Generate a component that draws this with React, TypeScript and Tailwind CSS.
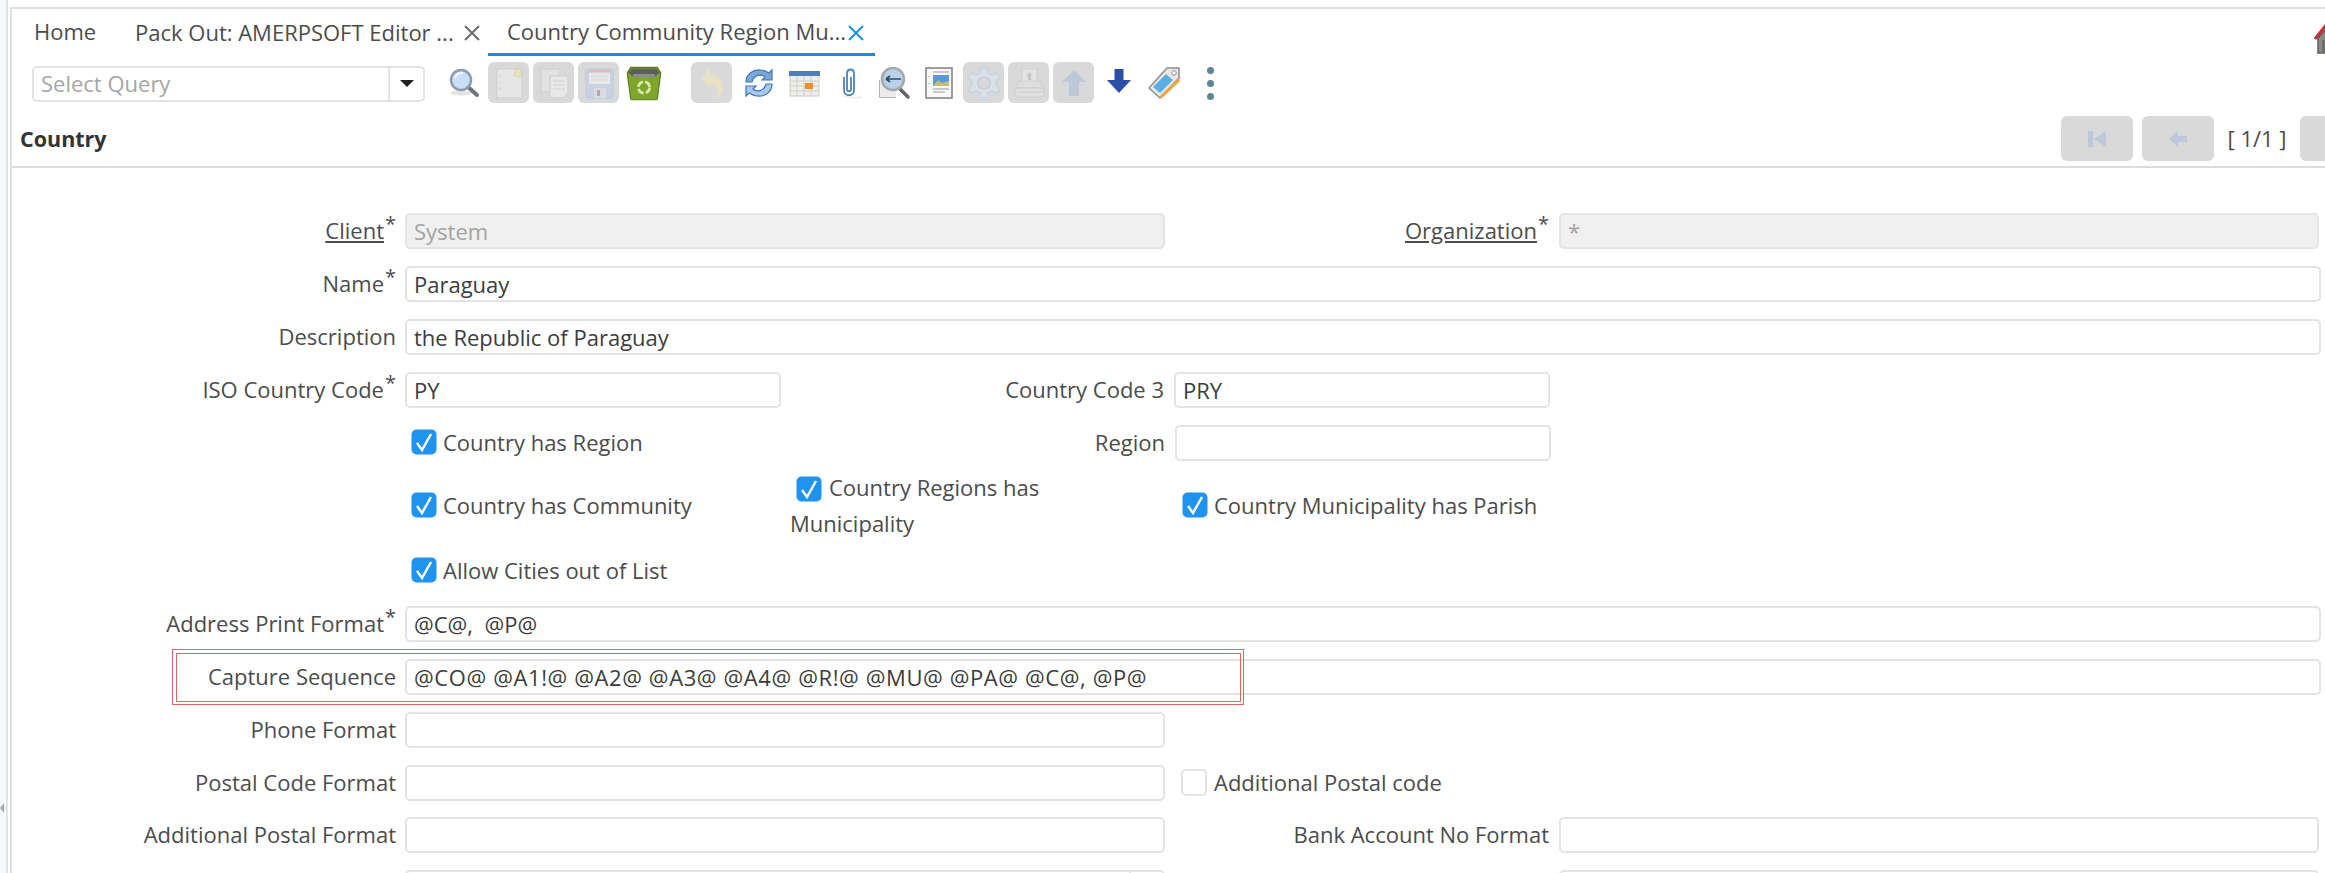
import React from "react";

const font = { fontFamily: '"Open Sans", "Noto Sans", sans-serif' };

function Svg({ children, size = 34, className = "" }: { children: React.ReactNode; size?: number; className?: string }) {
  return (
    <svg width={size} height={size} viewBox="0 0 34 34" className={className}>
      {children}
    </svg>
  );
}

const SearchIcon = () => (
  <Svg>
    <ellipse cx="14" cy="27" rx="11" ry="2.5" fill="#e4e4e4" />
    <path d="M21 21 L30 29" stroke="#6f7478" strokeWidth="4" strokeLinecap="round" />
    <circle cx="14" cy="14" r="10" fill="#c9dff6" stroke="#8c9db0" strokeWidth="2.5" />
    <path d="M8 12 a7 7 0 0 1 8 -5" stroke="#f4f9ff" strokeWidth="2" fill="none" />
  </Svg>
);
const NewIcon = () => (
  <Svg>
    <rect x="5" y="3" width="25" height="29" fill="#e6e6e6" stroke="#cfcfcf" />
    <circle cx="26" cy="7" r="4" fill="#e6e2c6" stroke="#dcd6a8" />
    <path d="M8 10v1M8 16v1M8 22v1" stroke="#c4c4c4" />
  </Svg>
);
const CopyIcon = () => (
  <Svg>
    <rect x="4" y="3" width="19" height="23" fill="#e2e2e2" stroke="#cfcfcf" />
    <path d="M13 10 H31 V27 L26 32 H13 Z" fill="#e8e8e8" stroke="#cbcbcb" />
    <path d="M16 15h12M16 19h12M16 23h12" stroke="#d2d2d2" />
  </Svg>
);
const SaveIcon = () => (
  <Svg>
    <rect x="4" y="3" width="27" height="29" rx="1.5" fill="#c8d2e2" stroke="#bcc8da" />
    <rect x="7" y="4" width="21" height="14" fill="#e8e8e8" />
    <rect x="7" y="4" width="21" height="2.5" fill="#e2b8b2" />
    <path d="M9 10h17M9 14h17" stroke="#d5d5d5" />
    <rect x="12" y="22" width="12" height="10" fill="#dcdcdc" />
    <rect x="15" y="24" width="3" height="6" fill="#adadad" />
  </Svg>
);
const TrashIcon = () => (
  <Svg size={38}>
    <path d="M2 8 L5 3 H29 L32 8 L29 31 Q29 32 27 32 H7 Q5 32 5 31 Z" fill="#7fa62c" stroke="#5b7a1e" />
    <path d="M3 8 L6 4 H28 L31 8 L27 11 H7 Z" fill="#5b5f58" />
    <path d="M7 9 H27 L26 12 H8 Z" fill="#8c8f88" />
    <circle cx="17" cy="21" r="5" fill="none" stroke="#d9eaa8" strokeWidth="2.5" strokeDasharray="6 2" />
  </Svg>
);
const UndoIcon = () => (
  <Svg>
    <path d="M6 12 L15 2 V8 C24 9 29 15 28 23 C27 28 25 31 21 33 C23 28 24 24 21 21 C19 19 17 18 15 18 V23 Z" fill="#e6e1c4" />
  </Svg>
);
const RefreshIcon = () => (
  <Svg>
    <path d="M4 16 C4 8 11 3 19 4 C23 4 25 6 27 7 L30 4 V14 H20 L23 11 C20 8 12 8 10 16 Z" fill="#7aa7d8" stroke="#3f74b5" strokeWidth="1.2" />
    <path d="M30 18 C30 26 23 31 15 30 C11 30 9 28 7 27 L4 30 V20 H14 L11 23 C14 26 22 26 24 18 Z" fill="#a8c8ea" stroke="#3f74b5" strokeWidth="1.2" />
  </Svg>
);
const CalendarIcon = () => (
  <Svg>
    <rect x="3" y="7" width="29" height="23" fill="#eeeeea" stroke="#c9c9c4" />
    <rect x="2" y="5" width="31" height="5" fill="#4f7fb8" />
    <path d="M3 15h29M3 20h29M3 25h29M10 10v20M17 10v20M24 10v20" stroke="#cfcfca" />
    <rect x="18" y="17" width="8" height="6" fill="#ee8f2e" />
  </Svg>
);
const ClipIcon = () => (
  <Svg>
    <path d="M12 11 V24 C12 31 22 31 22 24 V8 C22 2 15 2 15 8 V23 C15 26 19 26 19 23 V11" fill="none" stroke="#4f81bd" strokeWidth="1.8" />
    <path d="M12 30 Q22 33 30 31" stroke="#ececec" strokeWidth="1.5" fill="none" />
  </Svg>
);
const ZoomBackIcon = () => (
  <Svg>
    <path d="M3 14 V31 H19" fill="#f0f0f0" stroke="#9b9b9b" strokeWidth="1.5" />
    <path d="M3 14 L3 31 L19 31 L19 24 L8 14 Z" fill="#ececec" />
    <path d="M23 23 L31 31" stroke="#666" strokeWidth="3.5" strokeLinecap="round" />
    <circle cx="16" cy="13" r="11" fill="#b9d1ea" stroke="#a5a8ab" strokeWidth="2.5" />
    <path d="M9 13 H24 M9 13 L13 10 M9 13 L13 16" stroke="#33495f" strokeWidth="1.7" fill="none" />
  </Svg>
);
const ReportIcon = () => (
  <Svg>
    <rect x="4" y="2" width="26" height="30" fill="#fafafa" stroke="#7d7d7d" strokeWidth="1.5" />
    <rect x="11" y="9" width="16" height="11" fill="#5a9ad8" />
    <path d="M11 20 L16 14 L20 17 L27 15 V20 Z" fill="#c9b97a" />
    <path d="M11 6h16M11 23h16M11 26h12" stroke="#9a9a9a" />
    <path d="M7 10v1M7 17v1" stroke="#888" />
  </Svg>
);
const GearIcon = () => (
  <Svg>
    <path
      d="M14 2 H20 L21 7 L25 9 L30 7 L33 12 L29 15 V19 L33 22 L30 27 L25 25 L21 27 L20 32 H14 L13 27 L9 25 L4 27 L1 22 L5 19 V15 L1 12 L4 7 L9 9 L13 7 Z"
      fill="#dde0e5"
      stroke="#c6d3e4"
      strokeWidth="1.5"
    />
    <circle cx="17" cy="17" r="6" fill="#d9d9d9" stroke="#c9d2dc" strokeWidth="2" />
  </Svg>
);
const PrintIcon = () => (
  <Svg>
    <rect x="10" y="3" width="15" height="14" fill="#e4e4e4" stroke="#d0d0d0" />
    <path d="M17.5 6 L21 10 H19 V14 H16 V10 H14 Z" fill="#c6c6c6" />
    <path d="M8 15 H27 L32 22 H3 Z" fill="#dedede" stroke="#cfcfcf" />
    <rect x="3" y="22" width="29" height="9" rx="3" fill="#dfdfdf" stroke="#cfcfcf" />
    <path d="M5 26h25" stroke="#d0d0d0" />
  </Svg>
);
const UpIcon = () => (
  <Svg>
    <path d="M17 4 L29 16 H22 V30 H12 V16 H5 Z" fill="#bcc8da" />
  </Svg>
);
const DownIcon = () => (
  <Svg>
    <path d="M12.5 3 H21.5 V14 H29 L17 27 L5 14 H12.5 Z" fill="#2c50a6" />
  </Svg>
);
const TagIcon = () => (
  <Svg>
    <path d="M2 22 L20 2 L32 2 L32 12 L13 32 Z" fill="#e9e9e9" stroke="#8d8d8d" strokeWidth="1.5" strokeLinejoin="round" />
    <circle cx="27" cy="7" r="2.3" fill="#fff" stroke="#8d8d8d" />
    <path d="M6 21 L19 8 L26 14 L13 27 Z" fill="#5aaee6" />
    <path d="M14 31 L32 14" stroke="#eda336" strokeWidth="3" />
    <path d="M31 13 L33 11" stroke="#e67fd0" strokeWidth="2" />
  </Svg>
);

function Btn({ off, children, className = "" }: { off?: boolean; children: React.ReactNode; className?: string }) {
  return (
    <div className={`flex h-[41px] w-[41px] shrink-0 items-center justify-center rounded-[6px] ${off ? "bg-[#d9d9d9]" : ""} ${className}`}>
      {children}
    </div>
  );
}

function Close({ color }: { color: string }) {
  return (
    <svg width="18" height="18" viewBox="0 0 18 18" className="shrink-0">
      <path d="M2 2 L16 16 M16 2 L2 16" stroke={color} strokeWidth="2" />
    </svg>
  );
}

function Label({ text, star, link, className = "" }: { text: string; star?: boolean; link?: boolean; className?: string }) {
  return (
    <div className={`flex shrink-0 items-center justify-end pb-[2px] text-right ${className}`}>
      <span className={link ? "underline underline-offset-2" : ""}>{text}</span>
      {star && <span className="relative top-[-6px] ml-[1px] text-[20px] leading-none">*</span>}
    </div>
  );
}

function Field({ value, off, className = "" }: { value?: string; off?: boolean; className?: string }) {
  return (
    <div
      className={`flex h-[36px] shrink-0 items-center whitespace-pre rounded-[5px] border-2 border-[#e4e4e4] pl-[7px] ${off ? "bg-[#f0f0f0] text-[#a3a3a3]" : "bg-white text-[#3c3c3c]"} ${className}`}
    >
      {value}
    </div>
  );
}

function Check({ on = true }: { on?: boolean }) {
  return on ? (
    <svg width="26" height="26" viewBox="0 0 26 26" className="shrink-0">
      <rect x="0.5" y="0.5" width="25" height="25" rx="5" fill="#1f93ee" />
      <path d="M6 14 L11 21 L20 5" fill="none" stroke="#fff" strokeWidth="2.4" />
    </svg>
  ) : (
    <div className="h-[27px] w-[26px] shrink-0 rounded-[5px] border-2 border-[#e4e4e4] bg-white" />
  );
}

const L1 = "w-[385px] pr-[1px]";
const W_FULL = "w-[1916px]";
const W_MID = "w-[760px]";

export default function App() {
  return (
    <div style={font} className="flex h-[873px] w-[2325px] overflow-hidden bg-white text-[22px] text-[#4c4c4c]">
      <div className="relative h-full w-[8px] shrink-0 border-r-2 border-[#dfe3e8] bg-[#f6fafd]">
        <div className="absolute left-0 top-[803px] h-0 w-0 border-y-[5px] border-r-[4px] border-y-transparent border-r-[#aaaaaa]" />
      </div>
      <div className="ml-[2px] mt-[7px] flex min-w-0 flex-1 flex-col border-l-2 border-t-2 border-[#e0e0e0]">
        {/* tabs */}
        <div className="relative flex h-[47px] shrink-0 items-start">
          <div className="ml-[22px] mt-[7px] w-[101px] leading-[30px]">Home</div>
          <div className="mt-[8px] flex w-[353px] items-center whitespace-nowrap leading-[30px]">
            <span className="pb-[2px]">Pack Out: AMERPSOFT Editor ...</span>
            <span className="ml-auto mr-[7px]"><Close color="#6b6b6b" /></span>
          </div>
          <div className="flex h-[47px] w-[387px] items-start whitespace-nowrap border-b-[3px] border-[#0b8ff5] pt-[7px] leading-[30px]">
            <span className="ml-[19px]">Country Community Region Mu...</span>
            <span className="ml-auto mr-[10px] mt-[8px]"><Close color="#1490ee" /></span>
          </div>
          <div className="absolute right-[-14px] top-[11px] overflow-visible">
            <svg width="26" height="34" viewBox="0 0 26 34">
              <path d="M2 19 L14 4 L25 17" fill="none" stroke="#d7272a" strokeWidth="3" />
              <path d="M5 18 L14 8 L24 18 V33 H5 Z" fill="#8a8a86" stroke="#5d5d5a" strokeWidth="1.5" />
              <rect x="9" y="20" width="8" height="13" fill="#6d6d69" />
            </svg>
          </div>
        </div>
        {/* toolbar */}
        <div className="mt-[6px] flex h-[41px] shrink-0 items-center">
          <div className="ml-[20px] mt-[2px] flex h-[36px] w-[393px] items-center rounded-[5px] border-2 border-[#e4e4e4] text-[#a6a6a6]">
            <span className="flex-1 pl-[7px]">Select Query</span>
            <div className="flex h-full w-[35px] items-center justify-center border-l-2 border-[#e4e4e4]">
              <div className="h-0 w-0 border-x-[7px] border-t-[7px] border-x-transparent border-t-[#222]" />
            </div>
          </div>
          <div className="ml-[18px] flex items-center gap-[4px]">
            <Btn><SearchIcon /></Btn>
            <Btn off><NewIcon /></Btn>
            <Btn off><CopyIcon /></Btn>
            <Btn off><SaveIcon /></Btn>
            <Btn><TrashIcon /></Btn>
            <Btn off className="ml-[23px]"><UndoIcon /></Btn>
            <Btn className="ml-[2px]"><RefreshIcon /></Btn>
            <Btn><CalendarIcon /></Btn>
            <Btn><ClipIcon /></Btn>
            <Btn><ZoomBackIcon /></Btn>
            <Btn><ReportIcon /></Btn>
            <Btn off><GearIcon /></Btn>
            <Btn off><PrintIcon /></Btn>
            <Btn off><UpIcon /></Btn>
            <Btn><DownIcon /></Btn>
            <Btn><TagIcon /></Btn>
            <div className="ml-[19px] mt-[2px] flex flex-col gap-[6px]">
              <div className="h-[7px] w-[7px] rounded-full bg-[#5e8496]" />
              <div className="h-[7px] w-[7px] rounded-full bg-[#5e8496]" />
              <div className="h-[7px] w-[7px] rounded-full bg-[#5e8496]" />
            </div>
          </div>
        </div>
        {/* title bar */}
        <div className="mt-[13px] flex h-[52px] shrink-0 items-start border-b-2 border-[#dcdcdc]">
          <div className="ml-[8px] mt-[9px] text-[21.5px] font-bold leading-[27px] text-[#333]">Country</div>
          <div className="ml-auto flex h-[45px] items-center">
            <div className="flex h-[45px] w-[72px] items-center justify-center rounded-[6px] bg-[#d9d9d9]">
              <svg width="20" height="18" viewBox="0 0 20 18"><path d="M1 1h5v16H1zM19 1v16L7 9z" fill="#bcc8da" /></svg>
            </div>
            <div className="ml-[9px] flex h-[45px] w-[72px] items-center justify-center rounded-[6px] bg-[#d9d9d9]">
              <svg width="20" height="18" viewBox="0 0 20 18"><path d="M1 9 L10 1 V6 H19 V12 H10 V17 Z" fill="#bcc8da" /></svg>
            </div>
            <div className="w-[86px] whitespace-nowrap text-center">[ 1/1 ]</div>
            <div className="h-[45px] w-[25px] rounded-l-[6px] bg-[#d9d9d9]" />
          </div>
        </div>
        {/* form */}
        <div className="flex flex-col pt-[45px]">
          <div className="flex h-[36px] items-center">
            <Label text="Client" star link className={L1} />
            <Field value="System" off className={`ml-[8px] ${W_MID}`} />
            <Label text="Organization" star link className={L1} />
            <Field value="*" off className="ml-[9px] w-[760px]" />
          </div>
          <div className="mt-[17px] flex h-[36px] items-center">
            <Label text="Name" star className={L1} />
            <Field value="Paraguay" className={`ml-[8px] ${W_FULL}`} />
          </div>
          <div className="mt-[17px] flex h-[36px] items-center">
            <Label text="Description" className={L1} />
            <Field value="the Republic of Paraguay" className={`ml-[8px] ${W_FULL}`} />
          </div>
          <div className="mt-[17px] flex h-[36px] items-center">
            <Label text="ISO Country Code" star className={L1} />
            <Field value="PY" className="ml-[8px] w-[376px]" />
            <Label text="Country Code 3" className="w-[383px]" />
            <Field value="PRY" className="ml-[10px] w-[376px]" />
          </div>
          <div className="mt-[17px] flex h-[36px] items-center">
            <div className="ml-[399px] flex w-[379px] shrink-0 items-center gap-[6px] pb-[2px]"><Check /><span>Country has Region</span></div>
            <Label text="Region" className="w-[375px]" />
            <Field className="ml-[10px] w-[376px]" />
          </div>
          <div className="mt-[9px] flex h-[72px] items-center">
            <div className="ml-[399px] flex w-[379px] shrink-0 items-center gap-[6px] pb-[2px]"><Check /><span>Country has Community</span></div>
            <div className="w-[392px] shrink-0 pb-[2px] leading-[36px]">
              <span className="ml-[6px] inline-block align-[-6px]"><Check /></span>
              <span className="ml-[7px]">Country Regions has</span>
              <br />
              Municipality
            </div>
            <div className="flex items-center gap-[6px] pb-[2px]"><Check /><span>Country Municipality has Parish</span></div>
          </div>
          <div className="mt-[11px] flex h-[36px] items-center">
            <div className="ml-[399px] flex items-center gap-[6px] pb-[2px]"><Check /><span>Allow Cities out of List</span></div>
          </div>
          <div className="mt-[17px] flex h-[36px] items-center">
            <Label text="Address Print Format" star className={L1} />
            <Field value="@C@,  @P@" className={`ml-[8px] ${W_FULL}`} />
          </div>
          <div className="relative mt-[17px] flex h-[36px] items-center">
            <Label text="Capture Sequence" className={L1} />
            <Field value="@CO@ @A1!@ @A2@ @A3@ @A4@ @R!@ @MU@ @PA@ @C@, @P@" className={`ml-[8px] tracking-[0.6px] ${W_FULL}`} />
            <div className="pointer-events-none absolute left-[160px] top-[-10px] h-[56px] w-[1072px] border-[1.5px] border-[#e06666] p-[2.5px]">
              <div className="h-full w-full border-[1.5px] border-[#e06666]" />
            </div>
          </div>
          <div className="mt-[17px] flex h-[36px] items-center">
            <Label text="Phone Format" className={L1} />
            <Field className={`ml-[8px] ${W_MID}`} />
          </div>
          <div className="mt-[17px] flex h-[36px] items-center">
            <Label text="Postal Code Format" className={L1} />
            <Field className={`ml-[8px] ${W_MID}`} />
            <div className="ml-[16px] flex items-center gap-[7px] pb-[2px]"><Check on={false} /><span>Additional Postal code</span></div>
          </div>
          <div className="mt-[16px] flex h-[36px] items-center">
            <Label text="Additional Postal Format" className={L1} />
            <Field className={`ml-[8px] ${W_MID}`} />
            <Label text="Bank Account No Format" className={L1} />
            <Field className="ml-[9px] w-[760px]" />
          </div>
          <div className="mt-[17px] flex h-[36px] items-center">
            <div className={L1} />
            <div className={`ml-[8px] flex h-[36px] justify-end rounded-[5px] border-2 border-[#e4e4e4] ${W_MID}`}>
              <div className="w-[34px] border-l-2 border-[#e4e4e4]" />
            </div>
            <div className="ml-[394px] h-[36px] w-[760px] rounded-[5px] border-2 border-[#e4e4e4]" />
          </div>
        </div>
      </div>
    </div>
  );
}
